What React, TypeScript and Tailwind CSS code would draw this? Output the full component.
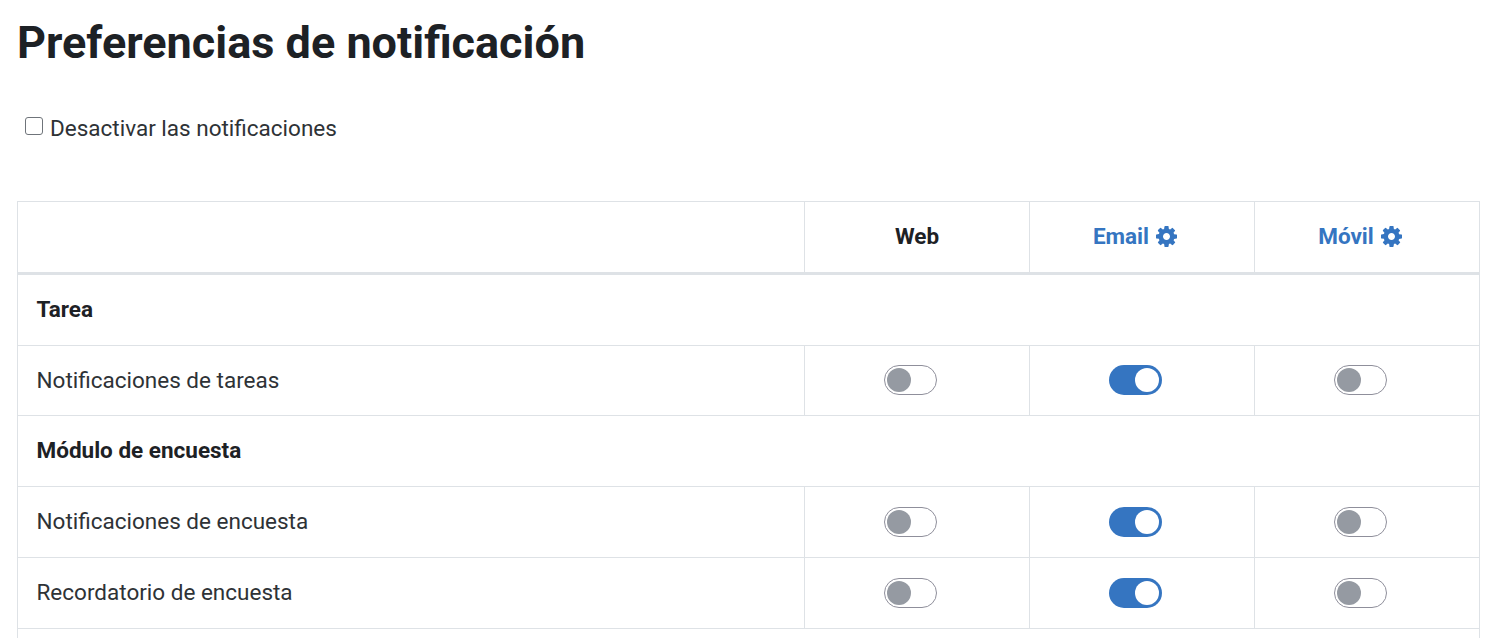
function Cog() {
  return (
    <svg viewBox="128 128 1536 1536" className="-mt-[1px] h-[21px] w-[21px] fill-current">
      <path d="M1152 896q0-106-75-181t-181-75-181 75-75 181 75 181 181 75 181-75 75-181zm512-109v222q0 12-8 23t-20 13l-185 28q-19 54-39 91 35 50 107 138 10 12 10 25t-9 23q-27 37-99 108t-94 71q-12 0-26-9l-138-108q-44 23-91 38-16 136-29 186-7 28-36 28h-222q-14 0-24.5-8.5t-11.5-21.5l-28-184q-49-16-90-37l-141 107q-10 9-25 9-14 0-25-11-126-114-165-168-7-10-7-23 0-12 8-23 15-21 51-66.5t54-70.5q-27-50-41-99l-183-27q-13-2-21-12.5t-8-23.5v-222q0-12 8-23t19-13l186-28q14-46 39-92-40-57-107-138-10-12-10-24 0-10 9-23 26-36 98.5-107.5t94.5-71.5q13 0 26 10l138 107q44-23 91-38 16-136 29-186 7-28 36-28h222q14 0 24.5 8.5t11.5 21.5l28 184q49 16 90 37l142-107q9-9 24-9 13 0 25 10 129 119 165 170 7 8 7 22 0 12-8 23-15 21-51 66.5t-54 70.5q26 50 41 98l183 28q13 2 21 12.5t8 23.5z" />
    </svg>
  );
}

function Toggle({ on }: { on?: boolean }) {
  if (on) {
    return (
      <span className="flex h-[30px] w-[53px] items-center justify-end rounded-full bg-[#3575c1] pr-[3px]">
        <span className="h-6 w-6 rounded-full bg-white" />
      </span>
    );
  }
  return (
    <span className="flex h-[30px] w-[53px] items-center rounded-full border border-[#8f8f9b] bg-white pl-[2px]">
      <span className="h-6 w-6 rounded-full bg-[#959aa2]" />
    </span>
  );
}

function Row({ label, email, tall }: { label: string; email?: boolean; tall?: boolean }) {
  const cell = tall ? "border border-[#dee2e6] pl-[79px]" : "border border-[#dee2e6] pb-[2px] pl-[79px]";
  return (
    <tr className={tall ? "h-[71px]" : "h-[70px]"}>
      <td className="border border-[#dee2e6] pl-[18.5px] text-[#2e3236]">{label}</td>
      <td className={cell}><Toggle /></td>
      <td className={cell}><Toggle on={email} /></td>
      <td className={cell}><Toggle /></td>
    </tr>
  );
}

function Section({ title, tall }: { title: string; tall?: boolean }) {
  return (
    <tr className={tall ? "h-[72px]" : "h-[71px]"}>
      <td colSpan={4} className="border border-[#dee2e6] pl-[18.5px] font-bold">{title}</td>
    </tr>
  );
}

function ConfigHead({ label }: { label: string }) {
  return (
    <th className="w-[225px] border border-[#dee2e6] text-[#3575c1]">
      <span className="inline-flex items-center gap-[7px] pr-[14px]">
        {label} <Cog />
      </span>
    </th>
  );
}

export default function App() {
  return (
    <div className="h-[638px] overflow-hidden bg-white px-[17px] font-['Roboto',sans-serif] text-[22.5px] text-[#1d2125]">
      <h1 className="pt-[14px] text-[45px] leading-[58px] font-bold">Preferencias de notificación</h1>
      <label className="mt-[40px] ml-[8px] flex items-center gap-[7px] leading-[32px] text-[#2e3236]">
        <input type="checkbox" className="-mt-[4px] h-[18px] w-[18px] appearance-none rounded-[3px] border border-[#6f747a] bg-white" />
        Desactivar las notificaciones
      </label>
      <table className="mt-[57px] w-[1463px] table-fixed border-collapse">
        <thead>
          <tr className="h-[72px] border-b-[3px] border-b-[#dee2e6] text-center font-bold">
            <th className="w-[787px] border border-[#dee2e6]" />
            <th className="w-[225px] border border-[#dee2e6]">Web</th>
            <ConfigHead label="Email" />
            <ConfigHead label="Móvil" />
          </tr>
        </thead>
        <tbody>
          <Section title="Tarea" tall />
          <Row label="Notificaciones de tareas" email />
          <Section title="Módulo de encuesta" />
          <Row label="Notificaciones de encuesta" email tall />
          <Row label="Recordatorio de encuesta" email tall />
          <Section title="" />
        </tbody>
      </table>
    </div>
  );
}
